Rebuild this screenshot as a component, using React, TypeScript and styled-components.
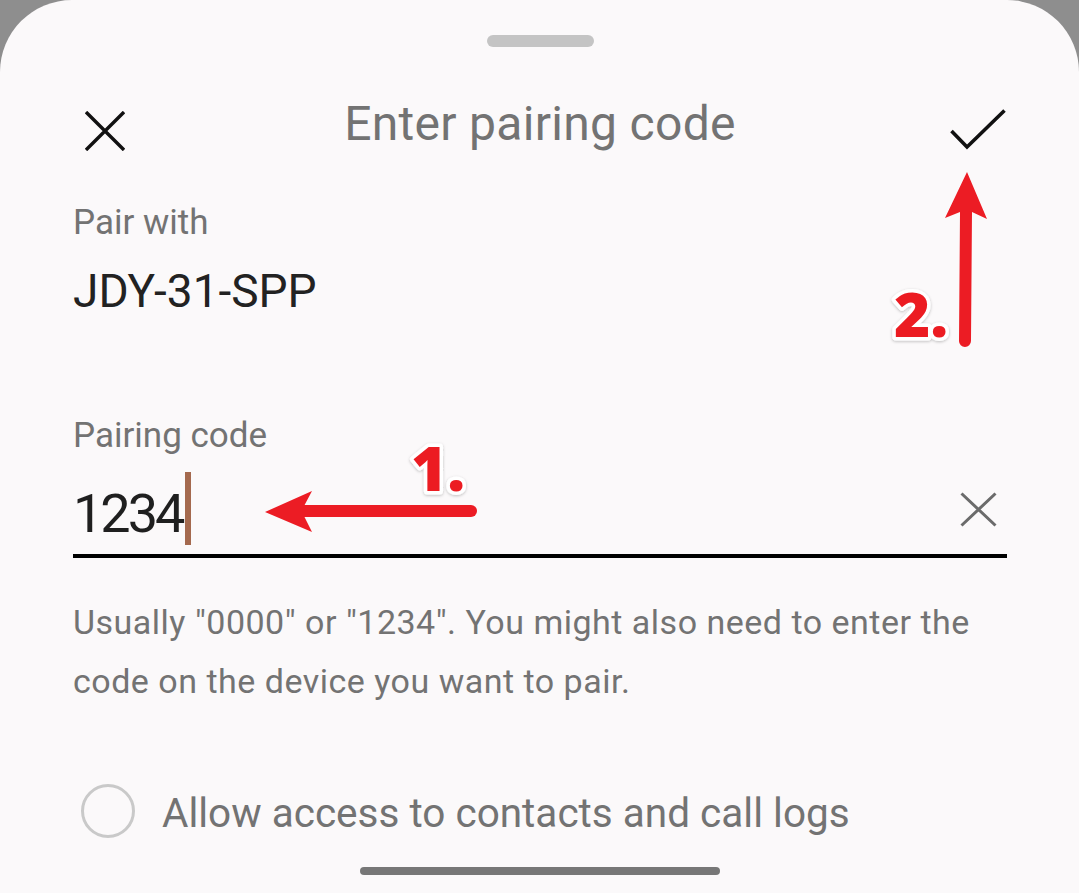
import React from "react";
import styled, { createGlobalStyle } from "styled-components";

const GlobalStyle = createGlobalStyle`
  html, body { margin: 0; padding: 0; background: #8e8e8e; }
  body { font-family: Roboto, "Noto Sans", sans-serif; }
`;

const Sheet = styled.div`
  position: relative;
  width: 1079px;
  height: 893px;
  box-sizing: border-box;
  background: #fbf9fa;
  border-radius: 72px 72px 0 0;
  overflow: hidden;
  display: flex;
  flex-direction: column;
  padding: 0 72px 0 73px;
`;

const Handle = styled.div`
  align-self: center;
  margin-top: 35px;
  width: 107px;
  height: 12px;
  border-radius: 6px;
  background: #c4c4c4;
`;

const Header = styled.div`
  display: grid;
  grid-template-columns: 1fr auto 1fr;
  align-items: start;
  margin-top: 47px;
  height: 72px;
`;

const Title = styled.h1`
  margin: 0;
  font-size: 48px;
  line-height: 60px;
  font-weight: 400;
  color: #737373;
  letter-spacing: 0.3px;
  white-space: nowrap;
`;

const IconSlot = styled.div<{ $end?: boolean; $top: number; $side: number }>`
  display: flex;
  justify-self: ${(p) => (p.$end ? "end" : "start")};
  margin-top: ${(p) => p.$top}px;
  ${(p) => (p.$end ? `margin-right: ${p.$side}px;` : `margin-left: ${p.$side}px;`)}
`;

const Label = styled.div<{ $gap: number }>`
  margin-top: ${(p) => p.$gap}px;
  font-size: 35px;
  line-height: 44px;
  color: #737373;
`;

const DeviceName = styled.div`
  margin-top: 18px;
  font-size: 46px;
  line-height: 56px;
  color: #222222;
`;

const InputRow = styled.div`
  margin-top: 19px;
  display: flex;
  align-items: flex-start;
  height: 74px;
  padding-bottom: 3px;
  border-bottom: 4px solid #000;
`;

const InputValue = styled.span`
  font-size: 54px;
  line-height: 74px;
  letter-spacing: -3px;
  color: #1f1f1f;
`;

const Caret = styled.span`
  width: 6px;
  height: 73px;
  margin-top: -5px;
  margin-left: 3px;
  background: #a4694e;
`;

const ClearSlot = styled.div`
  margin-left: auto;
  margin-top: 15px;
  margin-right: 10px;
  display: flex;
`;

const Helper = styled.p`
  margin: 35px 0 0;
  font-size: 34px;
  line-height: 59px;
  letter-spacing: 0.5px;
  color: #737373;
`;

const OptionRow = styled.label`
  margin-top: 71px;
  display: flex;
  align-items: center;
  gap: 27px;
`;

const Radio = styled.span`
  box-sizing: border-box;
  width: 54px;
  height: 54px;
  margin-left: 8px;
  border-radius: 50%;
  border: 3px solid #c9c9c9;
`;

const OptionText = styled.span`
  font-size: 40.5px;
  line-height: 53px;
  margin-top: 5px;
  color: #737373;
`;

const NavBar = styled.div`
  align-self: center;
  margin-top: 27px;
  width: 360px;
  height: 8px;
  border-radius: 4px;
  background: #777777;
`;

const Overlay = styled.svg`
  position: absolute;
  left: 0;
  top: 0;
  pointer-events: none;
`;

const StepText = styled.text`
  font-family: "Open Sans", "DejaVu Sans", sans-serif;
  font-weight: 800;
  font-size: 62px;
  fill: #ec1c24;
  stroke: #ffffff;
  stroke-width: 7px;
  stroke-linejoin: round;
  paint-order: stroke;
`;

const RED = "#ec1c24";

export default function App() {
  return (
    <>
      <GlobalStyle />
      <Sheet>
        <Handle />
        <Header>
          <IconSlot $top={17} $side={12}>
            <svg width="40" height="40" viewBox="0 0 40 40">
              <path d="M1 1 L39 39 M39 1 L1 39" stroke="#111" strokeWidth="3.4" fill="none" />
            </svg>
          </IconSlot>
          <Title>Enter pairing code</Title>
          <IconSlot $end $top={14} $side={1}>
            <svg width="56" height="42" viewBox="0 0 56 42">
              <path d="M1.5 23 L17 39 L54.5 2.5" stroke="#111" strokeWidth="3.6" fill="none" strokeLinejoin="miter" />
            </svg>
          </IconSlot>
        </Header>
        <Label $gap={35}>Pair with</Label>
        <DeviceName>JDY-31-SPP</DeviceName>
        <Label $gap={95}>Pairing code</Label>
        <InputRow>
          <InputValue>1234</InputValue>
          <Caret />
          <ClearSlot>
            <svg width="37" height="35" viewBox="0 0 37 35">
              <path d="M1.5 1.5 L35.5 33.5 M35.5 1.5 L1.5 33.5" stroke="#6b6b6b" strokeWidth="3" fill="none" />
            </svg>
          </ClearSlot>
        </InputRow>
        <Helper>
          Usually "0000" or "1234". You might also need to enter the code on the device you want to pair.
        </Helper>
        <OptionRow>
          <Radio />
          <OptionText>Allow access to contacts and call logs</OptionText>
        </OptionRow>
        <NavBar />
        <Overlay width="1079" height="893" viewBox="0 0 1079 893">
          <defs>
            <filter id="soft" x="-20%" y="-20%" width="140%" height="140%">
              <feDropShadow dx="0" dy="1" stdDeviation="1.5" floodColor="#000" floodOpacity="0.25" />
            </filter>
          </defs>
          <line x1="303" y1="511" x2="471" y2="511" stroke={RED} strokeWidth="12" strokeLinecap="round" />
          <polygon points="265,512 312,491 303,508 303,514 312,532" fill={RED} />
          <StepText x="411" y="491" filter="url(#soft)">1.</StepText>
          <line x1="965" y1="341" x2="966" y2="212" stroke={RED} strokeWidth="12" strokeLinecap="round" />
          <polygon points="967,172 987,219 972,212 960,212 945,218" fill={RED} />
          <StepText x="894" y="337" filter="url(#soft)">2.</StepText>
        </Overlay>
      </Sheet>
    </>
  );
}
